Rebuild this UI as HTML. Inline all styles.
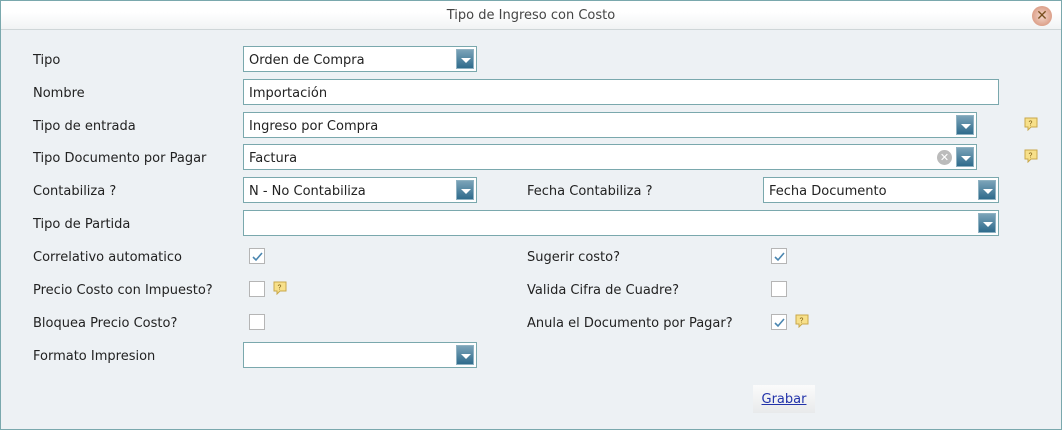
<!DOCTYPE html>
<html><head><meta charset="utf-8"><style>
*{box-sizing:border-box;margin:0;padding:0}
body{width:1062px;height:430px;background:#edf1f4;font-family:"DejaVu Sans","Liberation Sans",sans-serif;font-size:13px;color:#222;position:relative;overflow:hidden}
.win{position:absolute;left:0;top:0;width:1062px;height:430px;border:1px solid #7aa8ad;background:#edf1f4}
.title{position:absolute;left:0;top:0;width:1060px;height:29px;background:linear-gradient(#fff 0,#fff 40%,#f1f3f4 100%);border-bottom:1px solid #cfd6d8;text-align:center;line-height:30px;color:#444;font-size:13px}
.close{position:absolute;left:1031px;top:5px;width:20px;height:20px;border-radius:50%;background:radial-gradient(circle,#f4d8cc 0,#dca08a 70%,#c98a75 100%);color:#7a5020;font-size:14px;line-height:20px;text-align:center;font-weight:bold}
.l{position:absolute;left:33px;font-size:13px;line-height:16px;margin-top:2px}
.f{position:absolute;height:26px;border:1px solid #7aa8ad;background:#fff;padding-left:5px;padding-top:2px;line-height:24px;font-size:13px}
.dd{position:absolute;right:2px;top:2px;width:18px;height:20px;border:1px solid #8fb2c2;background:linear-gradient(#7ba3b8,#2f6b8c)}
.dd:after{content:"";position:absolute;left:4px;top:8px;border-left:5px solid transparent;border-right:5px solid transparent;border-top:5px solid #fff}
.cb{position:absolute;width:16px;height:16px;border:1px solid #b5b5b5;background:#fff}
.cb svg{position:absolute;left:1px;top:1px}
.h{position:absolute;width:14px;height:14px}
.clr{position:absolute;right:24px;top:5px;width:15px;height:15px;border-radius:50%;background:#bbb;color:#fff;font-size:11px;line-height:15px;text-align:center;font-weight:bold}
.btn{position:absolute;left:753px;top:385px;width:62px;height:28px;background:linear-gradient(#fbfbfb,#e8eaeb);text-align:center;line-height:28px;padding-top:1px;color:#2233aa;text-decoration:underline;font-size:13px}
</style></head><body>
<div class="win">
<div class="title">Tipo de Ingreso con Costo</div>
<div class="close">✕</div>
</div>
<svg width="0" height="0" style="position:absolute"><defs>
<g id="hp"><path d="M1 1h12v9H7l-3 3v-3H1z" fill="#f7e08a" stroke="#c9a84a" stroke-width="1"/><text x="4.5" y="8.5" font-size="7" fill="#7a5a10" font-family="Liberation Sans">?</text></g>
<g id="ck"><path d="M2 7l3 3 6-7" fill="none" stroke="#4a86b0" stroke-width="1.6"/></g>
</defs></svg>

<div class="l" style="top:51px">Tipo</div>
<div class="f" style="left:243px;top:46px;width:234px">Orden de Compra<div class="dd"></div></div>

<div class="l" style="top:84px">Nombre</div>
<div class="f" style="left:243px;top:79px;width:756px">Importación</div>

<div class="l" style="top:117px">Tipo de entrada</div>
<div class="f" style="left:243px;top:112px;width:734px">Ingreso por Compra<div class="dd"></div></div>
<svg class="h" style="left:1024px;top:117px" viewBox="0 0 14 14"><use href="#hp"/></svg>

<div class="l" style="top:149px">Tipo Documento por Pagar</div>
<div class="f" style="left:243px;top:144px;width:734px">Factura<div class="clr">✕</div><div class="dd"></div></div>
<svg class="h" style="left:1024px;top:149px" viewBox="0 0 14 14"><use href="#hp"/></svg>

<div class="l" style="top:182px">Contabiliza ?</div>
<div class="f" style="left:243px;top:177px;width:234px">N - No Contabiliza<div class="dd"></div></div>
<div class="l" style="left:527px;top:182px">Fecha Contabiliza ?</div>
<div class="f" style="left:763px;top:177px;width:236px">Fecha Documento<div class="dd"></div></div>

<div class="l" style="top:215px">Tipo de Partida</div>
<div class="f" style="left:243px;top:210px;width:756px"><div class="dd"></div></div>

<div class="l" style="top:248px">Correlativo automatico</div>
<div class="cb" style="left:249px;top:248px"><svg width="13" height="13"><use href="#ck"/></svg></div>
<div class="l" style="left:527px;top:248px">Sugerir costo?</div>
<div class="cb" style="left:771px;top:248px"><svg width="13" height="13"><use href="#ck"/></svg></div>

<div class="l" style="top:281px">Precio Costo con Impuesto?</div>
<div class="cb" style="left:249px;top:281px"></div>
<svg class="h" style="left:273px;top:281px" viewBox="0 0 14 14"><use href="#hp"/></svg>
<div class="l" style="left:527px;top:281px">Valida Cifra de Cuadre?</div>
<div class="cb" style="left:771px;top:281px"></div>

<div class="l" style="top:314px">Bloquea Precio Costo?</div>
<div class="cb" style="left:249px;top:314px"></div>
<div class="l" style="left:527px;top:314px">Anula el Documento por Pagar?</div>
<div class="cb" style="left:771px;top:314px"><svg width="13" height="13"><use href="#ck"/></svg></div>
<svg class="h" style="left:795px;top:314px" viewBox="0 0 14 14"><use href="#hp"/></svg>

<div class="l" style="top:347px">Formato Impresion</div>
<div class="f" style="left:243px;top:342px;width:234px"><div class="dd"></div></div>

<div class="btn">Grabar</div>
</body></html>
